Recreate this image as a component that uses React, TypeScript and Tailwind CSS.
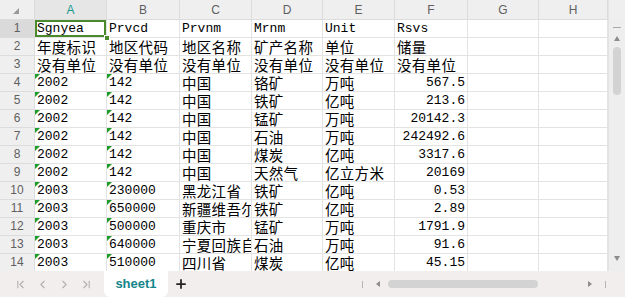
import { ChevronFirst, ChevronLast, ChevronLeft, ChevronRight, Plus } from "lucide-react";

const columns = [
  { key: "A", width: "w-[72px]" },
  { key: "B", width: "w-[73px]" },
  { key: "C", width: "w-[72px]" },
  { key: "D", width: "w-[71px]" },
  { key: "E", width: "w-[72px]" },
  { key: "F", width: "w-[73px]" },
  { key: "G", width: "w-[71px]" },
  { key: "H", width: "w-[69px]" },
];

const rows: string[][] = [
  ["Sgnyea", "Prvcd", "Prvnm", "Mrnm", "Unit", "Rsvs"],
  ["年度标识", "地区代码", "地区名称", "矿产名称", "单位", "储量"],
  ["没有单位", "没有单位", "没有单位", "没有单位", "没有单位", "没有单位"],
  ["2002", "142", "中国", "铬矿", "万吨", "567.5"],
  ["2002", "142", "中国", "铁矿", "亿吨", "213.6"],
  ["2002", "142", "中国", "锰矿", "万吨", "20142.3"],
  ["2002", "142", "中国", "石油", "万吨", "242492.6"],
  ["2002", "142", "中国", "煤炭", "亿吨", "3317.6"],
  ["2002", "142", "中国", "天然气", "亿立方米", "20169"],
  ["2003", "230000", "黑龙江省", "铁矿", "亿吨", "0.53"],
  ["2003", "650000", "新疆维吾尔自治区", "铁矿", "亿吨", "2.89"],
  ["2003", "500000", "重庆市", "锰矿", "万吨", "1791.9"],
  ["2003", "640000", "宁夏回族自治区", "石油", "万吨", "91.6"],
  ["2003", "510000", "四川省", "煤炭", "亿吨", "45.15"],
];

// split text so CJK runs get the wider full-width size
function CellText({ text }: { text: string }) {
  const parts = text.match(/[\u3400-\u9fff]+|[^\u3400-\u9fff]+/g) ?? [];
  return (
    <>
      {parts.map((part, i) =>
        /[\u3400-\u9fff]/.test(part) ? (
          <span
            key={i}
            className="inline-block h-[17px] align-top text-[14.5px] leading-[17px] tracking-[0.3px] font-['Noto_Sans_CJK_SC',sans-serif]"
          >
            {part}
          </span>
        ) : (
          <span key={i} className="inline-block h-[17px] align-top leading-[17px]">
            {part}
          </span>
        )
      )}
    </>
  );
}

export default function App() {
  return (
    <div className="flex h-[297px] w-[625px] flex-col overflow-hidden bg-white font-['Liberation_Mono','Noto_Sans_CJK_SC',monospace] text-[13px] text-black">
      <div className="flex h-[271px]">
        <div className="relative flex-1 overflow-hidden">
          {/* column header */}
          <div className="flex h-[20px] bg-[#efefef] font-['Liberation_Sans',sans-serif] text-[12px] text-[#5f5f5f]">
            <div className="relative w-[35px] shrink-0 border-r border-b border-[#dcdcdc]">
              <span className="absolute right-[15px] bottom-[5px] h-0 w-0 border-b-[6px] border-l-[6px] border-b-[#9a9a9a] border-l-transparent" />
            </div>
            {columns.map((col) => (
              <div
                key={col.key}
                className={`${col.width} flex shrink-0 items-center justify-center border-r border-b border-[#dcdcdc] ${
                  col.key === "A" ? "bg-[#e6e6e6] text-[#14998f]" : ""
                }`}
              >
                {col.key}
              </div>
            ))}
          </div>

          {rows.map((row, r) => (
            <div key={r} className="flex h-[18px] leading-[17px]">
              <div
                className={`flex w-[35px] shrink-0 items-center justify-center border-r border-b border-[#dcdcdc] font-['Liberation_Sans',sans-serif] text-[12px] text-[#5f5f5f] ${
                  r === 0 ? "bg-[#dadada]" : "bg-[#efefef]"
                }`}
              >
                {r + 1}
              </div>
              {columns.map((col, c) => {
                const value = row[c] ?? "";
                const numeric = c === 5 && r >= 3;
                const flagged = r >= 3 && c < 2;
                return (
                  <div
                    key={col.key}
                    className={`${col.width} relative shrink-0 overflow-hidden whitespace-nowrap border-r border-b border-[#e3e3e3] px-[2px] ${
                      numeric ? "text-right" : ""
                    }`}
                  >
                    {flagged && (
                      <span className="absolute top-0 left-0 h-0 w-0 border-t-[5px] border-r-[5px] border-t-[#1f9b2a] border-r-transparent" />
                    )}
                    <CellText text={value} />
                    {r === 0 && c === 0 && (
                      <span className="absolute inset-0 border-2 border-[#4a8a2c]" />
                    )}
                  </div>
                );
              })}
            </div>
          ))}

          {/* fill handle of the selected cell */}
          <span className="absolute top-[35px] left-[104px] h-[6px] w-[6px] border border-white bg-[#4a8a2c]" />
        </div>

        {/* vertical scrollbar */}
        <div className="flex w-[17px] shrink-0 flex-col items-center border-l border-[#e3e3e3] bg-[#eeeeee]">
          <div className="h-[20px] w-full bg-[#efefef]" />
          <div className="mt-[7px] h-[1px] w-[8px] bg-[#a9a9a9]" />
          <div className="mt-[8px] h-0 w-0 border-x-[3.5px] border-b-[5px] border-x-transparent border-b-[#8c8c8c]" />
          <div className="mt-[6px] h-[48px] w-[8px] rounded-full bg-[#d3d3d3]" />
          <div className="flex-1" />
          <div className="mb-[10px] h-0 w-0 border-x-[3.5px] border-t-[5px] border-x-transparent border-t-[#8c8c8c]" />
        </div>
      </div>

      {/* sheet tabs bar */}
      <div className="flex h-[26px] items-center bg-[#f2eeee] font-['Liberation_Sans',sans-serif]">
        <div className="flex items-center gap-[9px] pl-[14px] text-[#b0b0b0]">
          <ChevronFirst size={13} strokeWidth={2} />
          <ChevronLeft size={13} strokeWidth={2} />
          <ChevronRight size={13} strokeWidth={2} />
          <ChevronLast size={13} strokeWidth={2} />
        </div>
        <div className="ml-[11px] flex h-full w-[64px] items-center justify-center rounded-b-[6px] bg-white text-[13px] font-bold text-[#14868a]">
          sheet1
        </div>
        <Plus size={14} strokeWidth={3} className="ml-[6px] text-[#222]" />
        <div className="flex-1" />
        <div className="h-[7px] w-[1px] bg-[#b5b5b5]" />
        <div className="ml-[13px] h-0 w-0 border-y-[3px] border-r-[4px] border-y-transparent border-r-[#8c8c8c]" />
        <div className="ml-[8px] h-[8px] w-[150px] rounded-full bg-[#d3d3d3]" />
        <div className="flex-1 max-w-[50px]" />
        <div className="h-0 w-0 border-y-[3px] border-l-[4px] border-y-transparent border-l-[#8c8c8c]" />
        <div className="ml-[13px] mr-[19px] h-[7px] w-[1px] bg-[#b5b5b5]" />
      </div>
    </div>
  );
}
